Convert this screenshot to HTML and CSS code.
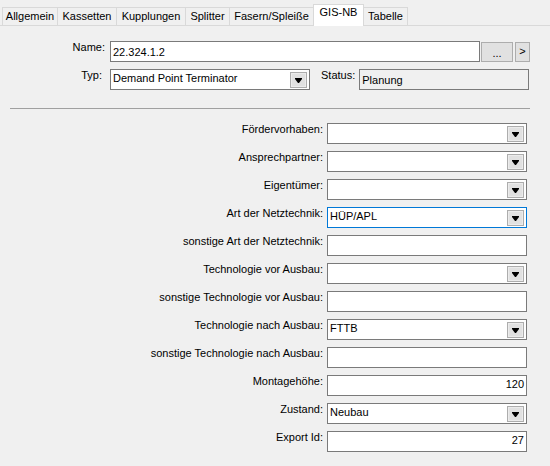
FILE: index.html
```html
<!DOCTYPE html>
<html>
<head>
  <meta charset="UTF-8">
  <title>GIS-NB</title>
  <link rel="stylesheet" href="styles.css">
</head>
<body>
  <div class="tabs">
    <div class="tab w-allg">Allgemein</div>
    <div class="tab w-kass">Kassetten</div>
    <div class="tab w-kupp">Kupplungen</div>
    <div class="tab w-split">Splitter</div>
    <div class="tab w-fas">Fasern/Spleiße</div>
    <div class="tab active w-gis">GIS-NB</div>
    <div class="tab w-tab">Tabelle</div>
  </div>

  <div class="head">
    <div class="row">
      <label class="hlabel">Name:</label>
      <div class="field name">22.324.1.2</div>
      <div class="btn dots">...</div>
      <div class="btn next">&gt;</div>
    </div>
    <div class="row">
      <label class="hlabel typ">Typ:</label>
      <div class="combo typcombo">
        <span class="val">Demand Point Terminator</span>
        <span class="drop"><svg width="7" height="5" viewBox="0 0 7 5"><path d="M0 0h7v1l-3 4h-1l-3-4z" fill="#000"/></svg></span>
      </div>
      <label class="slabel">Status:</label>
      <div class="field status">Planung</div>
    </div>
  </div>

  <div class="sep"></div>

  <div class="form">
    <div class="frow">
      <label>Fördervorhaben:</label>
      <div class="combo"><span class="val"></span><span class="drop"><svg width="7" height="5" viewBox="0 0 7 5"><path d="M0 0h7v1l-3 4h-1l-3-4z" fill="#000"/></svg></span></div>
    </div>
    <div class="frow">
      <label>Ansprechpartner:</label>
      <div class="combo"><span class="val"></span><span class="drop"><svg width="7" height="5" viewBox="0 0 7 5"><path d="M0 0h7v1l-3 4h-1l-3-4z" fill="#000"/></svg></span></div>
    </div>
    <div class="frow">
      <label>Eigentümer:</label>
      <div class="combo"><span class="val"></span><span class="drop"><svg width="7" height="5" viewBox="0 0 7 5"><path d="M0 0h7v1l-3 4h-1l-3-4z" fill="#000"/></svg></span></div>
    </div>
    <div class="frow">
      <label>Art der Netztechnik:</label>
      <div class="combo focus"><span class="val">HÜP/APL</span><span class="drop"><svg width="7" height="5" viewBox="0 0 7 5"><path d="M0 0h7v1l-3 4h-1l-3-4z" fill="#000"/></svg></span></div>
    </div>
    <div class="frow">
      <label>sonstige Art der Netztechnik:</label>
      <div class="field"></div>
    </div>
    <div class="frow">
      <label>Technologie vor Ausbau:</label>
      <div class="combo"><span class="val"></span><span class="drop"><svg width="7" height="5" viewBox="0 0 7 5"><path d="M0 0h7v1l-3 4h-1l-3-4z" fill="#000"/></svg></span></div>
    </div>
    <div class="frow">
      <label>sonstige Technologie vor Ausbau:</label>
      <div class="field"></div>
    </div>
    <div class="frow">
      <label>Technologie nach Ausbau:</label>
      <div class="combo"><span class="val">FTTB</span><span class="drop"><svg width="7" height="5" viewBox="0 0 7 5"><path d="M0 0h7v1l-3 4h-1l-3-4z" fill="#000"/></svg></span></div>
    </div>
    <div class="frow">
      <label>sonstige Technologie nach Ausbau:</label>
      <div class="field"></div>
    </div>
    <div class="frow">
      <label>Montagehöhe:</label>
      <div class="field num">120</div>
    </div>
    <div class="frow">
      <label>Zustand:</label>
      <div class="combo"><span class="val">Neubau</span><span class="drop"><svg width="7" height="5" viewBox="0 0 7 5"><path d="M0 0h7v1l-3 4h-1l-3-4z" fill="#000"/></svg></span></div>
    </div>
    <div class="frow">
      <label>Export Id:</label>
      <div class="field num">27</div>
    </div>
  </div>
</body>
</html>
```

FILE: styles.css
```css
body {
  margin: 0;
  width: 550px;
  height: 466px;
  background-color: #f0f0f0;
  font-family: "Liberation Sans", Arial, sans-serif;
  font-size: 11px;
  line-height: 13px;
  color: #000;
  overflow: hidden;
}
.tabs {
  display: flex;
  align-items: flex-end;
  height: 25px;
  padding-left: 2px;
  border-bottom: 1px solid #d9d9d9;
}
.tab {
  box-sizing: border-box;
  height: 19px;
  margin-bottom: -1px;
  margin-left: -1px;
  padding-top: 2px;
  text-align: center;
  border: 1px solid #d9d9d9;
  background-color: #f0f0f0;
}
.tab:first-child {
  margin-left: 0;
}
.tab.active {
  height: 22px;
  padding-top: 1px;
  border-bottom: none;
  background-color: #fff;
  position: relative;
}
.w-allg { width: 56px; }
.w-kass { width: 60px; }
.w-kupp { width: 70px; }
.w-split { width: 45px; }
.w-fas { width: 85px; }
.w-gis { width: 51px; }
.w-tab { width: 45px; }

.head {
  margin-top: 15px;
}
.row {
  display: flex;
  align-items: flex-start;
  margin-bottom: 7px;
}
.hlabel {
  width: 105px;
  margin-right: 5px;
  text-align: right;
}
.hlabel.typ {
  padding-right: 3px;
  width: 102px;
}
.slabel {
  margin-left: 11px;
  margin-right: 4px;
}
.field, .combo {
  box-sizing: border-box;
  height: 21px;
  border: 1px solid #7a7a7a;
  background-color: #fff;
  white-space: nowrap;
  overflow: hidden;
}
.field {
  padding: 2px 3px 0 2px;
}
.field.num {
  text-align: right;
  padding-right: 2px;
}
.field.name {
  width: 370px;
  height: 21px;
  padding-top: 4px;
}
.field.status {
  width: 170px;
  padding: 4px 3px 0 2px;
  background-color: #f0f0f0;
}
.btn {
  box-sizing: border-box;
  height: 20px;
  margin-top: 1px;
  border: 1px solid #adadad;
  background-color: #e1e1e1;
  text-align: center;
}
.btn.dots {
  width: 32px;
  margin-left: 1px;
  padding-top: 4px;
}
.btn.next {
  width: 15px;
  margin-left: 2px;
  padding-top: 2px;
}
.combo {
  display: flex;
  justify-content: space-between;
  align-items: flex-start;
  padding: 0 2px 0 2px;
}
.combo .val {
  padding-top: 2px;
}
.combo .drop {
  box-sizing: border-box;
  width: 17px;
  height: 16px;
  margin-top: 2px;
  border: 1px solid #adadad;
  background-color: #e1e1e1;
  box-shadow: inset 0 0 0 1px #ececec;
  display: flex;
  align-items: center;
  justify-content: center;
}
.combo .drop svg {
  display: block;
}
.combo.focus {
  border-color: #0078d7;
}
.typcombo {
  width: 200px;
}
.sep {
  margin: 18px 0 0 10px;
  width: 520px;
  height: 1px;
  background-color: #a0a0a0;
}
.form {
  margin-top: 14px;
}
.frow {
  display: flex;
  align-items: flex-start;
  margin-bottom: 7px;
}
.frow label {
  width: 323px;
  margin-right: 4px;
  text-align: right;
}
.frow .field, .frow .combo {
  width: 200px;
}
```
